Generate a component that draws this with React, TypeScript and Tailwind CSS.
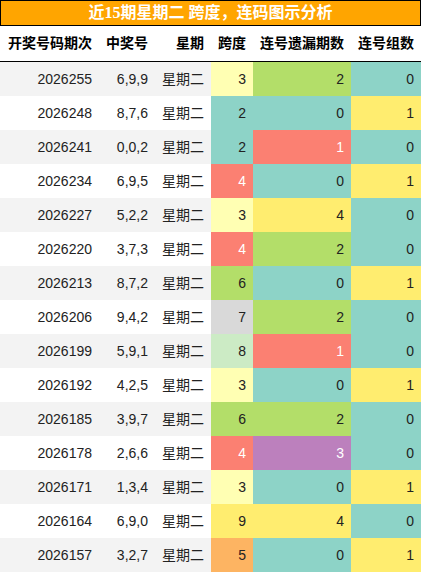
import React from "react";

type Row = [string, string, number, number, number];

const rows: Row[] = [
  ["2026255", "6,9,9", 3, 2, 0],
  ["2026248", "8,7,6", 2, 0, 1],
  ["2026241", "0,0,2", 2, 1, 0],
  ["2026234", "6,9,5", 4, 0, 1],
  ["2026227", "5,2,2", 3, 4, 0],
  ["2026220", "3,7,3", 4, 2, 0],
  ["2026213", "8,7,2", 6, 0, 1],
  ["2026206", "9,4,2", 7, 2, 0],
  ["2026199", "5,9,1", 8, 1, 0],
  ["2026192", "4,2,5", 3, 0, 1],
  ["2026185", "3,9,7", 6, 2, 0],
  ["2026178", "2,6,6", 4, 3, 0],
  ["2026171", "1,3,4", 3, 0, 1],
  ["2026164", "6,9,0", 9, 4, 0],
  ["2026157", "3,2,7", 5, 0, 1],
];

const spanCls: Record<number, string> = {
  2: "bg-[#8dd3c7] text-[#222]",
  3: "bg-[#ffffb3] text-[#222]",
  4: "bg-[#fb8072] text-white",
  5: "bg-[#fdb462] text-[#222]",
  6: "bg-[#b3de69] text-[#222]",
  7: "bg-[#d9d9d9] text-[#222]",
  8: "bg-[#ccebc5] text-[#222]",
  9: "bg-[#ffed6f] text-[#222]",
};

const missCls: Record<number, string> = {
  0: "bg-[#8dd3c7] text-[#222]",
  1: "bg-[#fb8072] text-white",
  2: "bg-[#b3de69] text-[#222]",
  3: "bg-[#bc80bd] text-white",
  4: "bg-[#ffed6f] text-[#222]",
};

const groupCls: Record<number, string> = {
  0: "bg-[#8dd3c7] text-[#222]",
  1: "bg-[#ffed6f] text-[#222]",
};

const font = { fontFamily: '"Liberation Sans", "Noto Sans CJK SC", sans-serif' };

export default function App() {
  return (
    <div className="w-[421px] bg-white" style={font}>
      <div
        className="h-[26px] bg-[#ffa500] border border-black flex items-center justify-center text-white font-bold text-[16px] leading-none"
        style={{ fontFamily: '"Liberation Serif", "Noto Sans CJK SC", serif' }}
      >
        近15期星期二 跨度，连码图示分析
      </div>
      <div className="h-[36px] border-b border-black flex items-center text-[14px] font-bold text-black">
        <div className="w-[99px] text-right pr-[7px]">开奖号码期次</div>
        <div className="w-[56px] text-right pr-[7px]">中奖号</div>
        <div className="w-[56px] text-right pr-[7px]">星期</div>
        <div className="w-[42px] text-right pr-[7px]">跨度</div>
        <div className="w-[98px] text-right pr-[7px]">连号遗漏期数</div>
        <div className="w-[70px] text-right pr-[7px]">连号组数</div>
      </div>
      {rows.map((r, i) => (
        <div
          key={r[0]}
          className={
            "h-[34px] flex items-stretch text-[14px] text-[#222] " +
            (i % 2 === 0 ? "bg-[#f3f3f3]" : "bg-white")
          }
        >
          <div className="w-[99px] flex items-center justify-end pr-[7px]">{r[0]}</div>
          <div className="w-[56px] flex items-center justify-end pr-[7px]">{r[1]}</div>
          <div className="w-[56px] flex items-center justify-end pr-[7px]">星期二</div>
          <div className={"w-[42px] flex items-center justify-end pr-[7px] " + spanCls[r[2]]}>{r[2]}</div>
          <div className={"w-[98px] flex items-center justify-end pr-[7px] " + missCls[r[3]]}>{r[3]}</div>
          <div className={"w-[70px] flex items-center justify-end pr-[7px] " + groupCls[r[4]]}>{r[4]}</div>
        </div>
      ))}
    </div>
  );
}
